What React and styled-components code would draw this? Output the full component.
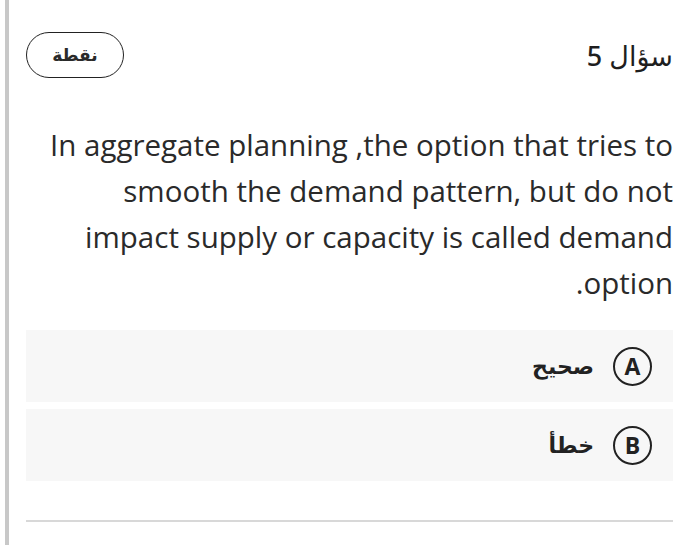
import styled, { createGlobalStyle } from "styled-components";

const GlobalStyle = createGlobalStyle`
  html, body {
    margin: 0;
    padding: 0;
    background: #fff;
  }
  body {
    font-family: "Open Sans", "DejaVu Sans", sans-serif;
    color: #2a2a2a;
  }
`;

const Page = styled.div`
  direction: rtl;
  margin-left: 5px;
  border-left: 4px solid #c8c8c8;
  min-height: 545px;
  padding: 32px 27px 0 17px;
  box-sizing: border-box;
`;

const Header = styled.div`
  display: flex;
  align-items: center;
  justify-content: space-between;
  height: 46px;
`;

const Title = styled.h2`
  margin: 0;
  font-size: 27px;
  font-weight: 500;
  color: #1e1e1e;
  font-family: "Noto Sans", "DejaVu Sans", sans-serif;
`;

const PointsPill = styled.div`
  width: 98px;
  height: 46px;
  box-sizing: border-box;
  border: 1.5px solid #222;
  border-radius: 23px;
  display: flex;
  align-items: center;
  justify-content: center;
  font-size: 17px;
  font-weight: 600;
  font-family: "DejaVu Sans", sans-serif;
`;

const Question = styled.p`
  margin: 44px 0 24px;
  font-size: 29.5px;
  line-height: 46px;
  text-align: right;
  color: #2a2a2a;
`;

const Options = styled.div`
  display: flex;
  flex-direction: column;
  gap: 7px;
`;

const Option = styled.div`
  display: flex;
  align-items: center;
  gap: 19px;
  height: 72px;
  padding: 0 21px;
  background: #f7f7f7;
`;

const Letter = styled.span`
  flex-shrink: 0;
  width: 39px;
  height: 39px;
  box-sizing: border-box;
  border: 2.5px solid #222;
  border-radius: 50%;
  display: flex;
  align-items: center;
  justify-content: center;
  font-size: 23px;
  font-weight: 700;
  line-height: 1;
  color: #222;
  direction: ltr;
`;

const OptionText = styled.span`
  font-size: 22px;
  font-weight: 600;
  font-family: "DejaVu Sans", sans-serif;
  color: #222;
`;

const Divider = styled.hr`
  margin: 39px 0 0;
  border: none;
  border-top: 2px solid #d8d8d8;
`;

const answers = [
  { letter: "A", text: "صحيح" },
  { letter: "B", text: "خطأ" },
];

export default function App() {
  return (
    <>
      <GlobalStyle />
      <Page>
        <Header>
          <Title>سؤال 5</Title>
          <PointsPill>نقطة</PointsPill>
        </Header>
        <Question>
          In aggregate planning ,the option that tries to smooth the demand
          pattern, but do not impact supply or capacity is called demand
          option.
        </Question>
        <Options>
          {answers.map((a) => (
            <Option key={a.letter}>
              <Letter>{a.letter}</Letter>
              <OptionText>{a.text}</OptionText>
            </Option>
          ))}
        </Options>
        <Divider />
      </Page>
    </>
  );
}
